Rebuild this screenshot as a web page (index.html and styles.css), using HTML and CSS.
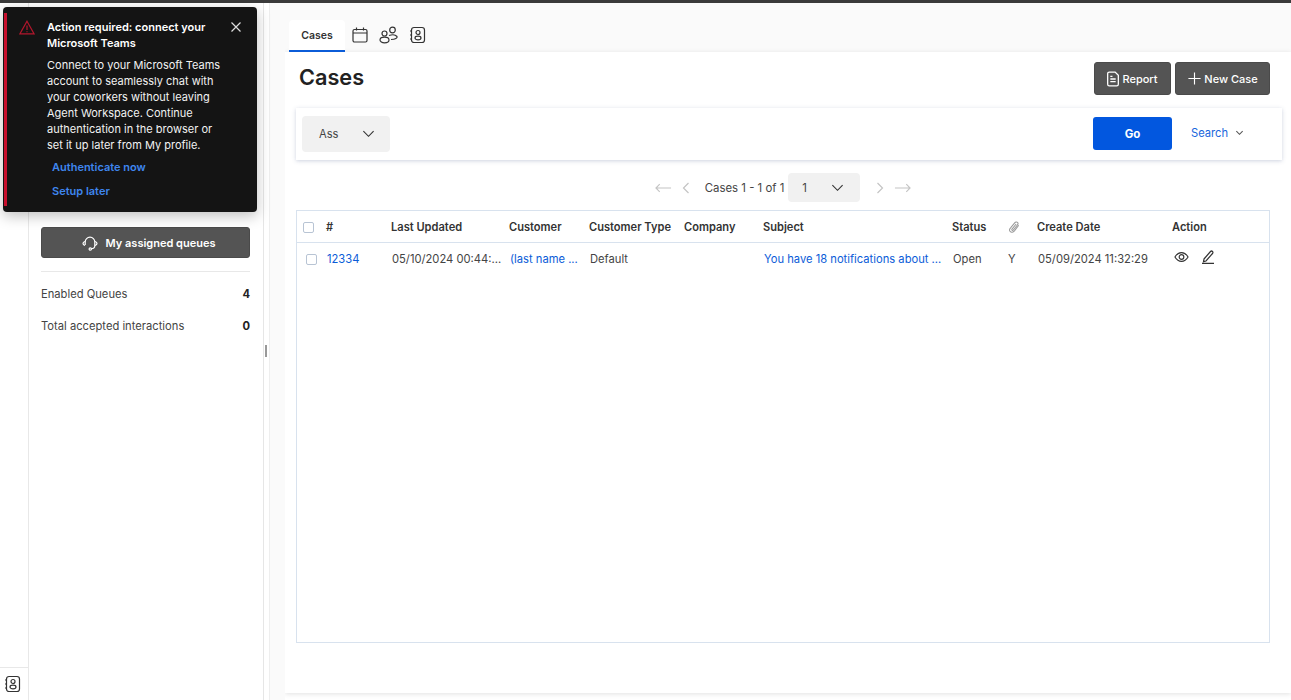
FILE: index.html
```html
<!DOCTYPE html>
<html lang="en">
<head>
    <meta charset="UTF-8">
    <meta name="viewport" content="width=device-width, initial-scale=1.0">
    <title>Cases</title>
    <link rel="stylesheet" href="styles.css">
</head>
<body>
    <div class="topbar"></div>
    <div class="layout">
        <div class="rail">
            <div class="rail-bottom">
                <svg class="icon-book" viewBox="0 0 18 18"><use href="#contact-book"></use></svg>
            </div>
        </div>
        <div class="sidebar">
            <button class="btn btn-wide">
                <svg class="icon" viewBox="0 0 16 16"><path d="M3.200 10V7a4.800 4.800 0 0 1 9.600 0v3.500c0 2-1.500 3.200-3.400 3.200"/><path d="M3 6.500c-1.300.4-2 1.100-2 2s.7 1.600 2 2M13 6.500c1.300.4 2 1.100 2 2s-.7 1.600-2 2"/><circle cx="8.300" cy="14" r="1.200"/></svg>
                My assigned queues
            </button>
            <div class="side-row first"><span>Enabled Queues</span><b>4</b></div>
            <div class="side-row"><span>Total accepted interactions</span><b>0</b></div>
        </div>
        <div class="gutter"><span class="handle"></span></div>
        <div class="main">
            <div class="tabs">
                <div class="tab">Cases</div>
                <svg class="tab-icon" viewBox="0 0 18 18"><rect x="2" y="3.500" width="14" height="12.500" rx="1.500"/><path d="M2 7h14M5.500 1.500v3M12.500 1.500v3"/></svg>
                <svg class="tab-icon wide" viewBox="0 0 20 18"><circle cx="13.500" cy="4" r="2.800"/><circle cx="5.500" cy="7.500" r="2.500"/><ellipse cx="5.500" cy="14" rx="4.500" ry="2.800"/><path d="M10 9.500c3-1 6.500-.8 8 1 .6 1.500-1.500 3-6 3"/></svg>
                <svg class="tab-icon" viewBox="0 0 18 18"><use href="#contact-book"></use></svg>
            </div>
            <div class="panel">
                <div class="panel-head">
                    <h1>Cases</h1>
                    <div class="head-btns">
                        <button class="btn btn-report">
                            <svg class="icon" viewBox="2.500 0.500 11 15"><path d="M3 3a1.500 1.500 0 0 1 1.500-1.500H10L13 4.500V13a1.500 1.500 0 0 1-1.500 1.500h-7A1.500 1.500 0 0 1 3 13z"/><path d="M5.500 8h5M5.500 10.500h5M5.500 5.500h2"/></svg>
                            Report
                        </button>
                        <button class="btn btn-new">
                            <svg class="icon" viewBox="0 0 16 16"><path d="M8 1.500v13M1.500 8h13"/></svg>
                            New Case
                        </button>
                    </div>
                </div>
                <div class="filter">
                    <div class="select select-ass">
                        <span>Ass</span>
                        <svg class="chev" viewBox="0 0 14 8"><path d="M1.500 1l5.500 5.500L12.500 1"/></svg>
                    </div>
                    <button class="btn-go">Go</button>
                    <a class="search-link">Search
                        <svg class="chev-small" viewBox="0 0 10 6"><path d="M1.500 1L5 4.500 8.500 1"/></svg>
                    </a>
                </div>
                <div class="pager">
                    <svg class="pg-arrow long" viewBox="0 0 18 10"><path d="M17 5H1M5 1L1 5l4 4"/></svg>
                    <svg class="pg-arrow short" viewBox="0 0 8 12"><path d="M6.500 1L1.500 6l5 5"/></svg>
                    <span class="pg-text">Cases 1 - 1 of 1</span>
                    <div class="select select-page">
                        <span>1</span>
                        <svg class="chev" viewBox="0 0 14 8"><path d="M1.500 1l5.500 5.500L12.500 1"/></svg>
                    </div>
                    <svg class="pg-arrow short next" viewBox="0 0 8 12"><path d="M1.500 1l5 5-5 5"/></svg>
                    <svg class="pg-arrow long" viewBox="0 0 18 10"><path d="M1 5h16M13 1l4 4-4 4"/></svg>
                </div>
                <div class="table-box">
                    <table>
                        <colgroup>
                            <col class="c-check"><col class="c-num"><col class="c-updated"><col class="c-customer"><col class="c-type"><col class="c-company"><col class="c-subject"><col class="c-status"><col class="c-clip"><col class="c-created"><col>
                        </colgroup>
                        <thead>
                            <tr>
                                <th><span class="check head-check"></span></th>
                                <th>#</th>
                                <th>Last Updated</th>
                                <th>Customer</th>
                                <th>Customer Type</th>
                                <th>Company</th>
                                <th>Subject</th>
                                <th>Status</th>
                                <th><svg class="clip" viewBox="0 0 14 14"><path d="M12.500 5L7.500 11.500c-1.500 1.800-3.700 2-4.800 1S1.500 9.700 3 8l4.800-5.800c1-1.200 2.500-1.300 3.300-.6s.7 2-.2 3.100L6.200 10.500c-.5.600-1.100.7-1.500.3s-.3-1 .2-1.600L9.500 3.500"/></svg></th>
                                <th>Create Date</th>
                                <th>Action</th>
                            </tr>
                        </thead>
                        <tbody>
                            <tr>
                                <td><span class="check"></span></td>
                                <td><a>12334</a></td>
                                <td>05/10/2024 00:44:...</td>
                                <td><a>(last name ...</a></td>
                                <td>Default</td>
                                <td></td>
                                <td><a>You have 18 notifications about ...</a></td>
                                <td>Open</td>
                                <td>Y</td>
                                <td>05/09/2024 11:32:29</td>
                                <td>
                                    <div class="actions">
                                        <svg class="act eye" viewBox="0 0 16 12"><path d="M1 6C2.800 3 5.200 1.300 8 1.300S13.200 3 15 6c-1.800 3-4.200 4.700-7 4.700S2.800 9 1 6z"/><circle cx="8" cy="6" r="2.500"/></svg>
                                        <svg class="act" viewBox="0 0 14 14"><path d="M3 9L9.500 1.500c.6-.6 1.400-.6 2 0s.6 1.400 0 2L5 11l-2.500.6zM1 13.300h12"/></svg>
                                    </div>
                                </td>
                            </tr>
                        </tbody>
                    </table>
                </div>
            </div>
        </div>
    </div>

    <div class="toast">
        <svg class="toast-warn" viewBox="0 0 16 15"><path d="M8 1.200L15 13.800H1zM8 5.500v4.500M8 11.200v1"/></svg>
        <div class="toast-body">
            <div class="toast-title">Action required: connect your Microsoft Teams</div>
            <p>Connect to your Microsoft Teams account to seamlessly chat with your coworkers without leaving Agent Workspace. Continue authentication in the browser or set it up later from My profile.</p>
            <a>Authenticate now</a>
            <a>Setup later</a>
        </div>
        <svg class="toast-close" viewBox="0 0 12 12"><path d="M1.500 1.500l9 9M10.500 1.500l-9 9"/></svg>
    </div>

    <svg class="defs" width="0" height="0">
        <symbol id="contact-book" viewBox="0 0 18 18">
            <rect x="2.500" y="1.500" width="13" height="15" rx="2.500"/>
            <circle cx="9" cy="6.500" r="2"/>
            <ellipse cx="9" cy="12" rx="3" ry="1.800"/>
            <path d="M1 5h2M1 9h2M1 13h2"/>
        </symbol>
    </svg>
</body>
</html>
```

FILE: styles.css
```css
* {
    box-sizing: border-box;
}
html, body {
    margin: 0;
    padding: 0;
    height: 700px;
    overflow: hidden;
}
body {
    background-color: #fff;
    color: #2b2b2b;
    font-family: Inter, "Liberation Sans", sans-serif;
    font-size: 11.2px;
}
svg {
    fill: none;
    stroke: currentColor;
    stroke-width: 1.2;
    flex: none;
}
a {
    color: #0b5cd8;
}
.defs {
    position: absolute;
}
.topbar {
    height: 3px;
    background-color: #3a3a3a;
}
.layout {
    display: flex;
    height: 697px;
}

/* left rail */
.rail {
    width: 29px;
    border-right: 1px solid #e8e8e8;
    display: flex;
    flex-direction: column;
    justify-content: flex-end;
}
.rail-bottom {
    height: 33px;
    border-top: 1px solid #e8e8e8;
    padding: 7px 0 0 4px;
}
.icon-book {
    display: block;
    width: 18px;
    height: 18px;
    color: #333;
}

/* queues */
.sidebar {
    width: 235px;
    padding: 224px 13px 0 12px;
    border-right: 1px solid #e6e6e6;
}
.btn {
    display: flex;
    align-items: center;
    justify-content: center;
    background-color: #545454;
    color: #fff;
    border: 1px solid #4a4a4a;
    border-radius: 3px;
    font-family: inherit;
    font-size: 11px;
    font-weight: 500;
    padding: 0;
}
.btn .icon {
    width: 15px;
    height: 15px;
    margin-right: 2px;
}
.btn-wide {
    width: 100%;
    height: 31px;
    padding-left: 6px;
    font-weight: 600;
}
.btn-wide .icon {
    width: 16px;
    height: 16px;
    margin-right: 8px;
}
.side-row {
    display: flex;
    justify-content: space-between;
    align-items: center;
    height: 32px;
    color: #444;
}
.side-row.first {
    margin-top: 13px;
    padding-top: 6px;
    border-top: 1px solid #e8e8e8;
    height: 39px;
}
.side-row b {
    color: #222;
}

.gutter {
    width: 21px;
    background-color: #fafafa;
    border-left: 5px solid #fff;
    box-shadow: inset 1px 0 0 #eee;
    position: relative;
}
.handle {
    position: absolute;
    left: -4px;
    top: 342px;
    width: 2px;
    height: 12px;
    background-color: #999;
}

/* main area */
.main {
    flex: 1;
    background-color: #fafafa;
    padding-top: 17px;
    height: 690px;
}
.tabs {
    display: flex;
    align-items: flex-start;
    height: 32px;
    padding-left: 4px;
}
.tab {
    width: 56px;
    height: 32px;
    line-height: 31px;
    text-align: center;
    background-color: #fff;
    border-bottom: 2px solid #0b5cd8;
    border-radius: 4px 4px 0 0;
    font-size: 10.500px;
    font-weight: 600;
    color: #333;
}
.tab-icon {
    width: 18px;
    height: 18px;
    margin: 6px 0 0 6px;
    color: #333;
}
.tab-icon.wide {
    width: 20px;
    margin-left: 10px;
}
.tab-icon:last-child {
    margin-left: 10px;
}
.panel {
    height: 641px;
    background-color: #fff;
    box-shadow: 0 1px 5px rgba(0, 0, 0, 0.12);
    padding: 0 21px 0 11px;
}
.panel-head {
    display: flex;
    justify-content: space-between;
    height: 56px;
    padding: 10px 0 0 3px;
}
h1 {
    margin: 0;
    font-size: 21.700px;
    font-weight: 600;
    line-height: 31px;
    color: #222;
}
.head-btns {
    display: flex;
    gap: 4px;
}
.btn-report {
    width: 77px;
    height: 33px;
}
.btn-report .icon {
    width: 12px;
    height: 16px;
    margin-right: 3px;
}
.btn-new {
    width: 95px;
    height: 33px;
}
.filter {
    display: flex;
    align-items: center;
    height: 52px;
    margin-right: -12px;
    padding-left: 6px;
    background-color: #fff;
    box-shadow: 0 1px 4px rgba(60, 80, 130, 0.25);
}
.select {
    display: flex;
    align-items: center;
    justify-content: space-between;
    background-color: #f1f1f1;
    border-radius: 4px;
    color: #444;
}
.select-ass {
    width: 88px;
    height: 36px;
    padding: 0 15px 0 17px;
}
.select-page {
    width: 72px;
    height: 29px;
    padding: 0 16px 0 14px;
}
.chev {
    width: 13px;
    height: 8px;
    color: #333;
}
.btn-go {
    width: 79px;
    height: 33px;
    margin: 0 0 1px auto;
    background-color: #0257df;
    border: 0;
    border-radius: 3px;
    color: #fff;
    font-family: inherit;
    font-size: 11.500px;
    font-weight: 700;
}
.search-link {
    display: flex;
    align-items: center;
    width: 110px;
    padding: 0 0 2px 19px;
    color: #1a66dc;
}
.chev-small {
    width: 9px;
    height: 6px;
    margin-left: 7px;
    color: #555;
}
.pager {
    display: flex;
    align-items: center;
    justify-content: center;
    height: 50px;
    padding-top: 5px;
    color: #444;
    font-size: 11.400px;
}
.pg-arrow {
    color: #c4c4c4;
}
.pg-arrow.long {
    width: 17px;
    height: 10px;
}
.pg-arrow.short {
    width: 8px;
    height: 12px;
    margin: 0 15px 0 10px;
}
.pg-arrow.next {
    margin: 0 10px 0 16px;
}
.pg-text {
    margin-right: 4px;
}
.table-box {
    height: 433px;
    border: 1px solid #d8e2ee;
}
table {
    width: 100%;
    border-collapse: collapse;
    table-layout: fixed;
}
.c-check { width: 29px; }
.c-num { width: 65px; }
.c-updated { width: 118px; }
.c-customer { width: 80px; }
.c-type { width: 95px; }
.c-company { width: 79px; }
.c-subject { width: 189px; }
.c-status { width: 55px; }
.c-clip { width: 30px; }
.c-created { width: 135px; }
th {
    height: 31px;
    padding: 2px 0 0;
    text-align: left;
    font-size: 11.100px;
    font-weight: 600;
    color: #333;
    border-bottom: 1px solid #d8e2ee;
}
td {
    height: 32px;
    padding: 2px 0 0 1px;
    color: #444;
    white-space: nowrap;
}
.check {
    display: block;
    width: 11px;
    height: 11px;
    margin-left: 8px;
    border: 1px solid #b8c4d4;
    border-radius: 2px;
}
.head-check {
    margin-left: 6px;
}
.clip {
    display: block;
    width: 12px;
    height: 12px;
    margin-left: 1px;
    color: #999;
}
.actions {
    display: flex;
    align-items: center;
    gap: 12px;
    padding: 0 0 4px 1px;
}
.act {
    width: 14px;
    height: 14px;
    color: #333;
}
.act.eye {
    width: 15px;
    height: 12px;
}

/* teams notice, sits over the sidebar */
.toast {
    position: absolute;
    left: 3px;
    top: 7px;
    width: 254px;
    height: 205px;
    display: flex;
    background-color: #141414;
    border-radius: 4px;
    box-shadow: 0 4px 14px rgba(0, 0, 0, 0.25);
    color: #f2f2f2;
    font-size: 11px;
    line-height: 16px;
}
.toast::before {
    content: "";
    position: absolute;
    left: 1px;
    top: 6px;
    bottom: 6px;
    width: 3px;
    background-color: #c8102e;
}
.toast-warn {
    width: 16px;
    height: 15px;
    margin: 13px 0 0 16px;
    color: #b3162c;
}
.toast-body {
    width: 180px;
    margin: 12px 0 0 12px;
}
.toast-title {
    font-weight: 600;
    color: #fff;
}
.toast-body p {
    margin: 6px 0 0;
}
.toast-body a {
    display: block;
    margin: 8px 0 0 5px;
    color: #3f86ee;
    font-weight: 600;
}
.toast-body p + a {
    margin-top: 6px;
}
.toast-close {
    width: 12px;
    height: 12px;
    margin: 14px 0 0 3px;
    color: #ddd;
}
```
